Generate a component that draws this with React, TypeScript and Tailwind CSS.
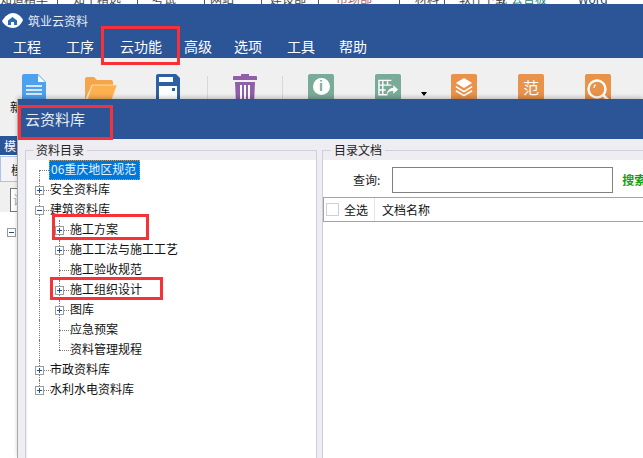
import type { ReactNode } from 'react';

const FONT = 'font-["Noto_Sans_CJK_SC","Liberation_Sans",sans-serif]';

function DocIcon() {
  return (
    <svg width="24" height="32" viewBox="0 0 24 32">
      <path d="M2 0h14l8 8v22a2 2 0 0 1-2 2H2a2 2 0 0 1-2-2V2a2 2 0 0 1 2-2z" fill="#4ea1ee" />
      <path d="M16 1l7 7h-7z" fill="#fff" />
      <path d="M4 12h16M4 16h16M4 20h16" stroke="#fff" strokeWidth="1.6" />
    </svg>
  );
}

function FolderIcon() {
  return (
    <svg width="32" height="28" viewBox="0 0 32 28">
      <path d="M0 3a2 2 0 0 1 2-2h7l3 3h14a2 2 0 0 1 2 2v3H7L0 24z" fill="#f6a64a" />
      <path d="M7 9h25l-6 17a1 1 0 0 1-1 1H1z" fill="#fdb04f" stroke="#fde3bb" strokeWidth="0.8" />
    </svg>
  );
}

function SaveIcon() {
  return (
    <svg width="24" height="32" viewBox="0 0 24 32">
      <path d="M2 0h18l4 4v26a2 2 0 0 1-2 2H2a2 2 0 0 1-2-2V2a2 2 0 0 1 2-2z" fill="#2d5fa3" />
      <rect x="3" y="3" width="14" height="5" fill="#fff" />
      <rect x="3" y="12" width="18" height="14" fill="#fff" />
      <rect x="16" y="14" width="3" height="3" fill="#2d5fa3" />
    </svg>
  );
}

function TrashIcon() {
  return (
    <svg width="24" height="32" viewBox="0 0 24 32" fill="#8f5fa8">
      <path d="M8 0h8v2h7a1 1 0 0 1 1 1v3H0V3a1 1 0 0 1 1-1h7z" />
      <path d="M2 8h20l-1 22H3z" />
      <path d="M8 11v14M12 11v14M16 11v14" stroke="#fff" strokeWidth="2" />
    </svg>
  );
}

function ExportGlyph() {
  return (
    <svg width="21" height="18" viewBox="0 0 22 18" fill="none" stroke="#fff" strokeWidth="1.5">
      <path d="M14 1H1v15h9M1 6h13M1 11h7M5 1v15M10 1v5" />
      <path d="M9 16c1-5 4-7 7-7V6l5 4.500-5 4.500v-3c-3 0-5 1-7 4z" fill="#fff" stroke="none" />
    </svg>
  );
}

function LayersGlyph() {
  return (
    <svg width="18" height="20" viewBox="0 0 20 22" fill="none" stroke="#fff">
      <path d="M10 0l9 5.500-9 5.500-9-5.500z" fill="#fff" stroke="none" />
      <path d="M1 9.500l9 5.500 9-5.500M1 14l9 5.500 9-5.500" strokeWidth="1.800" />
    </svg>
  );
}

function SearchGlyph() {
  return (
    <svg width="22" height="24" viewBox="0 0 22 24" fill="none" stroke="#fff">
      <circle cx="10" cy="10" r="8.500" strokeWidth="2.400" />
      <path d="M16 16l5 5" strokeWidth="2.800" />
      <path d="M7 9c0-1.500.5-2.500 1.500-3.500" strokeWidth="1.200" />
    </svg>
  );
}

function LogoIcon() {
  return (
    <svg width="21" height="15" viewBox="0 0 21 15">
      <path d="M0 8C3 3 7 0 11 0c4 0 8 3 10 7-2 5-6 8-10 8-5 0-9-3-11-7z" fill="#fff" />
      <path d="M6 7.500L10.500 4 15 7.500V12H6z" fill="#2b6cb0" />
      <rect x="9" y="9" width="3" height="3" fill="#fff" />
    </svg>
  );
}

function SquareIcon({ color, children, className }: { color: string; children: ReactNode; className: string }) {
  return (
    <div className={`w-[26px] h-[32px] rounded-[2px] flex items-center justify-center shrink-0 ${color} ${className}`}>
      {children}
    </div>
  );
}

function Expander({ open }: { open?: boolean }) {
  return (
    <span className="relative z-10 w-[9px] h-[9px] border border-[#9a9a9a] bg-white flex items-center justify-center shrink-0">
      <span className="absolute w-[5px] h-px bg-[#2b4a8c]" />
      {!open && <span className="absolute w-px h-[5px] bg-[#2b4a8c]" />}
    </span>
  );
}

interface Node {
  label: string;
  level: 0 | 1;
  expander?: 'plus' | 'minus';
  last?: boolean;
}

const nodes: Node[] = [
  { label: '安全资料库', level: 0, expander: 'plus' },
  { label: '建筑资料库', level: 0, expander: 'minus' },
  { label: '施工方案', level: 1, expander: 'plus' },
  { label: '施工工法与施工工艺', level: 1, expander: 'plus' },
  { label: '施工验收规范', level: 1 },
  { label: '施工组织设计', level: 1, expander: 'plus' },
  { label: '图库', level: 1, expander: 'plus' },
  { label: '应急预案', level: 1 },
  { label: '资料管理规程', level: 1, last: true },
  { label: '市政资料库', level: 0, expander: 'plus' },
  { label: '水利水电资料库', level: 0, expander: 'plus', last: true },
];

function TreeRow({ node }: { node: Node }) {
  return (
    <div className="flex h-5 items-center pl-[8px]">
      {/* dotted guide of the parent level */}
      {node.level === 1 && (
        <span className="relative w-[20px] h-5 shrink-0">
          <span className="absolute left-[4px] top-0 h-5 border-l border-dotted border-[#777]" />
        </span>
      )}
      <span className="relative w-[19px] h-5 shrink-0 flex items-center">
        <span className={`absolute left-[4px] top-0 border-l border-dotted border-[#777] ${node.last ? 'h-[10px]' : 'h-5'}`} />
        <span className="absolute left-[4px] top-[10px] w-[12px] border-t border-dotted border-[#777]" />
        {node.expander && <Expander open={node.expander === 'minus'} />}
      </span>
      <span className="text-[12px] leading-4 mb-[2px] text-[#111] whitespace-nowrap ml-[-4px]">{node.label}</span>
    </div>
  );
}

function GroupLegend({ children, className }: { children: ReactNode; className: string }) {
  return (
    <div className={`absolute top-[-10px] px-[3px] bg-[#eeedf2] text-[12px] leading-[17px] text-[#222] ${className}`}>
      {children}
    </div>
  );
}

function RedBox({ className }: { className: string }) {
  return <div className={`absolute border-[3px] border-[#f83138] z-30 ${className}`} />;
}

export default function App() {
  return (
    <div className={`relative w-[643px] h-[458px] overflow-hidden bg-white flex flex-col ${FONT}`}>
      {/* desktop strip cut off on top */}
      <div className="h-[4px] overflow-hidden bg-white shrink-0">
        <div className="flex mt-[-7px] text-[12px] leading-[12px] text-[#444] whitespace-nowrap">
          <span className="w-[58px] shrink-0 border-r border-[#555]">知道精华</span>
          <span className="w-[80px] shrink-0 pl-[15px] border-r border-[#555]">知乎精选</span>
          <span className="w-[67px] shrink-0 pl-[14px] border-r border-[#555]">考试</span>
          <span className="w-[57px] shrink-0 pl-[5px] border-r border-[#555]">网站</span>
          <span className="w-[57px] shrink-0 pl-[8px] border-r border-[#555]">建设部</span>
          <span className="w-[81px] shrink-0 pl-[17px] border-r border-[#555] text-[#a66]">市场部</span>
          <span className="w-[45px] shrink-0 pl-[15px] border-r border-[#555]">材料</span>
          <span className="w-[66px] shrink-0 pl-[14px]">软件下载</span>
          <span className="w-[67px] shrink-0 text-[#287]">公告板</span>
          <span className="text-[#246]">Word</span>
        </div>
      </div>

      {/* main title + menu */}
      <div className="h-[54px] bg-[#2b5597] text-white shrink-0 flex flex-col">
        <div className="h-[31px] flex items-center pl-[2px] pt-[2px]">
          <LogoIcon />
          <span className="ml-[5px] text-[12px] leading-4 text-[#e6ecf5]">筑业云资料</span>
        </div>
        <div className="flex text-[14px] leading-[22px] pl-[13px] whitespace-nowrap">
          <span>工程</span>
          <span className="ml-[25px]">工序</span>
          <span className="ml-[26px]">云功能</span>
          <span className="ml-[22px]">高级</span>
          <span className="ml-[22px]">选项</span>
          <span className="ml-[25px]">工具</span>
          <span className="ml-[24px]">帮助</span>
        </div>
      </div>

      {/* toolbar, mostly hidden behind the dialog */}
      <div className="h-[78px] bg-[#f0f0f0] shrink-0 relative">
        <div className="flex items-start pt-[16px] pl-[22px]">
          <DocIcon />
          <div className="ml-[39px] mt-[2px]"><FolderIcon /></div>
          <div className="ml-[39px]"><SaveIcon /></div>
          <div className="ml-[27px] w-px h-[26px] bg-[#d8d8d8] mt-[2px]" />
          <div className="ml-[25px]"><TrashIcon /></div>
          <div className="ml-[25px] w-px h-[26px] bg-[#d8d8d8] mt-[2px]" />
          <SquareIcon color="bg-[#7aab99]" className="ml-[25px]">
            <span className="w-[17px] h-[17px] rounded-full bg-white text-[#7aab99] text-[14px] leading-[17px] font-bold text-center -mt-[7px] font-['Liberation_Sans',sans-serif]">i</span>
          </SquareIcon>
          <SquareIcon color="bg-[#7aab99]" className="ml-[41px]">
            <div className="-mt-[4px]"><ExportGlyph /></div>
          </SquareIcon>
          <div className="ml-[20px] mt-[18px] w-0 h-0 border-x-[3px] border-x-transparent border-t-[4px] border-t-black" />
          <SquareIcon color="bg-[#e8924a]" className="ml-[24px]">
            <div className="-mt-[4px]"><LayersGlyph /></div>
          </SquareIcon>
          <SquareIcon color="bg-[#e8924a]" className="ml-[41px]">
            <span className="text-[16px] leading-5 text-white -mt-[6px]">范</span>
          </SquareIcon>
          <SquareIcon color="bg-[#e8924a]" className="ml-[41px]">
            <div className="mt-[2px]"><SearchGlyph /></div>
          </SquareIcon>
        </div>
        <div className="pl-[10px] mt-[-7px] text-[12px] leading-4 text-[#111]">新</div>
      </div>

      {/* module panel behind the dialog */}
      <div className="flex-1 bg-white flex flex-col min-h-0">
        <div className="h-[19px] bg-[#2b5597] text-white text-[12px] leading-[19px] pl-[4px] shrink-0">模</div>
        <div className="h-[27px] bg-[#f0f0f0] border-t border-white shrink-0">
          <div className="h-[26px] border border-[#a9c4e4] bg-[#f4f4f8] text-[12px] leading-[26px] pl-[10px] text-[#222]">模</div>
        </div>
        <div className="h-[30px] bg-[#f0f0f0] pl-[10px] pt-[6px] shrink-0">
          <div className="w-[40px] h-[24px] border border-[#777] bg-white text-[12px] leading-[22px] pl-[2px] text-[#9ab]">设</div>
        </div>
        <div className="pl-[7px] pt-[16px]"><Expander open /></div>
      </div>

      {/* cloud library dialog */}
      <div className="absolute left-[17px] top-[99px] right-0 bottom-0 z-20 bg-[#eeedf2] border-l border-[#a8a8a8] shadow-[0_-2px_4px_rgba(0,0,0,0.2)] flex flex-col">
        <div className="h-[40px] bg-[#2b5597] text-[#e6ecf5] text-[15px] leading-[39px] pl-[7px] shrink-0">云资料库</div>
        <div className="flex-1 flex pt-[11px] min-h-0">
          {/* directory tree */}
          <div className="relative ml-[7px] w-[292px] shrink-0 border-l border-t border-r border-[#cdcfdc] pt-[9px] pl-px">
            <GroupLegend className="left-[7px]">资料目录</GroupLegend>
            <div className="bg-white h-full">
              <div className="flex h-5 items-center pl-[8px]">
                <span className="relative w-[19px] h-5 shrink-0">
                  <span className="absolute left-[4px] top-[10px] h-[10px] border-l border-dotted border-[#777]" />
                  <span className="absolute left-[4px] top-[10px] w-[12px] border-t border-dotted border-[#777]" />
                </span>
                <span className="ml-[-5px] h-5 w-[91px] bg-[#0078d7] border border-dotted border-[#f08a24] text-[12px] leading-[16px] text-[#e6f2ff] whitespace-nowrap pl-[1px]">06重庆地区规范</span>
              </div>
              {nodes.map((node) => (
                <TreeRow key={node.label} node={node} />
              ))}
            </div>
          </div>

          {/* documents */}
          <div className="relative ml-[5px] flex-1 min-w-0 border-l border-t border-[#cdcfdc] pt-[9px]">
            <GroupLegend className="left-[8px]">目录文档</GroupLegend>
            <div className="bg-white h-full">
              <div className="flex items-center h-[37px] pt-[2px] text-[12px] whitespace-nowrap">
                <span className="ml-[30px] text-[#222]">查询:</span>
                <div className="ml-[12px] w-[221px] h-[26px] border border-[#808080] bg-white shrink-0" />
                <span className="ml-[9px] text-[#11a011] font-bold">搜索</span>
              </div>
              <div className="h-[25px] border-y border-l border-[#a3a3a3] flex items-center text-[12px] text-[#111] whitespace-nowrap">
                <span className="ml-[2px] w-[13px] h-[13px] border border-[#cfcfdc] bg-white shrink-0" />
                <span className="ml-[5px]">全选</span>
                <span className="ml-[6px] w-px h-full bg-[#e6e6e6]" />
                <span className="ml-[7px]">文档名称</span>
              </div>
            </div>
          </div>
        </div>
      </div>

      {/* annotations */}
      <RedBox className="left-[101px] top-[26px] w-[79px] h-[39px]" />
      <RedBox className="left-[18px] top-[105px] w-[95px] h-[35px]" />
      <RedBox className="left-[52px] top-[214px] w-[97px] h-[26px]" />
      <RedBox className="left-[50px] top-[277px] w-[113px] h-[23px]" />
    </div>
  );
}
